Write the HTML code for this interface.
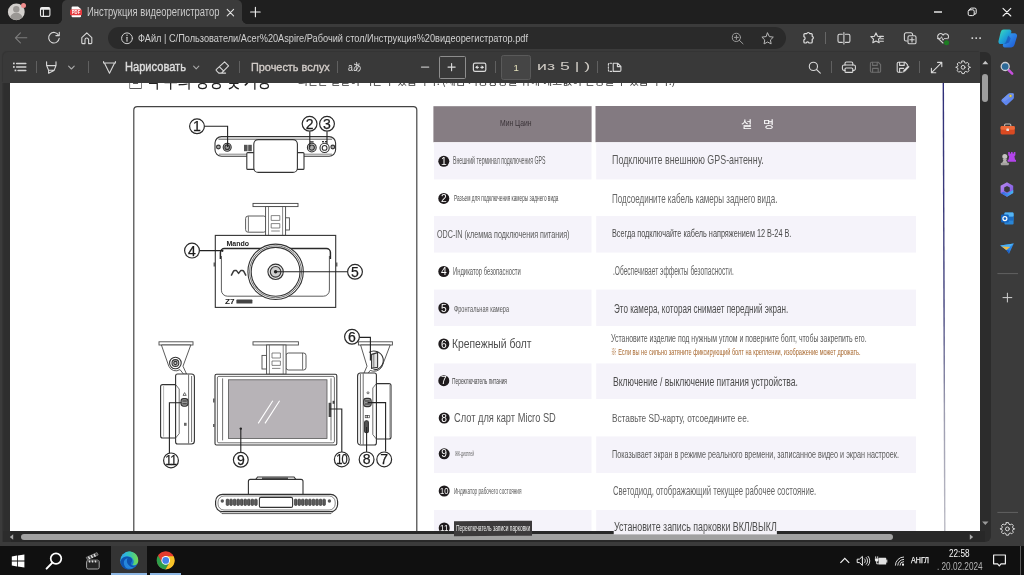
<!DOCTYPE html>
<html lang="ru"><head><meta charset="utf-8"><title>Инструкция видеорегистратор</title>
<style>
*{box-sizing:border-box}
html,body{margin:0;padding:0}
body{width:1024px;height:575px;overflow:hidden;position:relative;background:#3b3b3b;font-family:"Liberation Sans","Noto Sans CJK KR",sans-serif}
.a{position:absolute}
.t{position:absolute;white-space:nowrap;line-height:1;transform-origin:0 50%}
svg{position:absolute;left:0;top:0;overflow:visible}
.ic{fill:none;stroke:#d8d8d8;stroke-width:1.1;stroke-linecap:round;stroke-linejoin:round}
.dg{fill:none;stroke:#333;stroke-width:1.1}
.dgw{fill:#fff;stroke:#333;stroke-width:1.1}
.num{font-family:"Liberation Sans",sans-serif;font-size:12.5px;fill:#1c1c1c;stroke:#1c1c1c;stroke-width:.25;text-anchor:middle}
.sep{position:absolute;width:1px;background:#606060}
</style></head>
<body>
<div class="a" style="left:0;top:0;width:1024px;height:575px;will-change:transform"><div class="a" style="left:10px;top:82.8px;width:970px;height:448.5px;background:#fff;overflow:hidden"></div>
<div class="a" style="left:0;top:0;width:1024px;height:531.3px;overflow:hidden">
<svg width="1024" height="575" viewBox="0 0 1024 575">
 <defs><linearGradient id="mline" gradientUnits="userSpaceOnUse" x1="0" y1="83" x2="0" y2="532"><stop offset="0" stop-color="#2e2e78"/><stop offset=".5" stop-color="#45457f"/><stop offset=".72" stop-color="#9a9aae"/><stop offset="1" stop-color="#bdbdc6"/></linearGradient><clipPath id="pgclip"><rect x="10" y="82.800" width="970" height="448.500"/></clipPath></defs>
 <g clip-path="url(#pgclip)">
 <!-- right margin line -->
 <path d="M943.3 83L944.8 532" stroke="url(#mline)" stroke-width="1.400"/>
 <!-- table header -->
 <rect x="433.4" y="106.2" width="158.2" height="36" fill="#867d83"/>
 <rect x="595.5" y="106" width="320.5" height="36.2" fill="#837a81"/>
 <rect x="434" y="142.4" width="157.5" height="37" fill="#f5f3fa"/><rect x="596.2" y="142.4" width="319.8" height="37" fill="#f5f3fa"/><rect x="434" y="216" width="157.5" height="36.6" fill="#f5f3fa"/><rect x="596.2" y="216" width="319.8" height="36.6" fill="#f5f3fa"/><rect x="434" y="289.6" width="157.5" height="36.4" fill="#f5f3fa"/><rect x="596.2" y="289.6" width="319.8" height="36.4" fill="#f5f3fa"/><rect x="434" y="363.4" width="157.5" height="35.6" fill="#f5f3fa"/><rect x="596.2" y="363.4" width="319.8" height="35.6" fill="#f5f3fa"/><rect x="434" y="436.4" width="157.5" height="36.6" fill="#f5f3fa"/><rect x="596.2" y="436.4" width="319.8" height="36.6" fill="#f5f3fa"/><rect x="434" y="510" width="157.5" height="36" fill="#f5f3fa"/><rect x="596.2" y="510" width="319.8" height="36" fill="#f5f3fa"/>
 <!-- diagram frame -->
 <rect x="133.8" y="106.6" width="283" height="440" rx="3.5" class="dg" style="stroke:#444;stroke-width:1.2"/>

 <!-- ===== top view ===== -->
 <rect x="215" y="136.6" width="120.6" height="19.6" rx="6.5" class="dgw"/>
 <path d="M218.5 139.2h113.6" class="dg" style="stroke-width:.8"/>
 <path d="M219 154.2h113" class="dg" style="stroke-width:.6"/>
 <rect x="246.8" y="152.6" width="57.2" height="16.8" rx="1" class="dgw"/>
 <rect x="253.8" y="139.6" width="43.6" height="32.8" rx="4.5" class="dgw"/>
 <circle cx="218.4" cy="147" r="1.9" class="dg" style="fill:#aaa"/>
 <circle cx="332.8" cy="147" r="1.9" class="dg" style="fill:#aaa"/>
 <circle cx="227.2" cy="147.2" r="4" class="dg" style="fill:#bbb"/><circle cx="227.2" cy="147.2" r="2.3" class="dg" style="fill:#999"/>
 <rect x="244" y="144.8" width="3.6" height="6.4" fill="#555"/><rect x="248.2" y="144.8" width="3.6" height="6.4" fill="#555"/>
 <circle cx="311.8" cy="147.6" r="4.4" class="dg" style="fill:#ddd"/><circle cx="311.8" cy="147.6" r="2.6" class="dg" style="fill:#aaa"/>
 <circle cx="324.6" cy="147.9" r="4.6" class="dgw"/><circle cx="324.6" cy="147.9" r="2.4" class="dg"/>
 <rect x="310" y="141.2" width="3.6" height="1.4" fill="#333"/><rect x="322" y="141" width="2" height="1.4" fill="#333"/><rect x="325" y="141" width="2" height="1.4" fill="#333"/>
 <path d="M204.6 126.2h23v20.8" class="dg" style="stroke:#222"/>
 <path d="M309.8 131.4v16" class="dg" style="stroke:#222"/>
 <path d="M327 131.4v13" class="dg" style="stroke:#222"/>
 <circle cx="197" cy="126.3" r="7.4" class="dgw" style="stroke:#2a2a2a;stroke-width:1.2"/><text x="197" y="131.27" class="num" style="font-size:14px">1</text><circle cx="309.6" cy="123.8" r="7.4" class="dgw" style="stroke:#2a2a2a;stroke-width:1.2"/><text x="309.6" y="128.77" class="num" style="font-size:14px">2</text><circle cx="327" cy="123.8" r="7.4" class="dgw" style="stroke:#2a2a2a;stroke-width:1.2"/><text x="327" y="128.77" class="num" style="font-size:14px">3</text>

 <!-- ===== front view ===== -->
 <rect x="253" y="203.400" width="45" height="3.200" class="dgw" style="stroke:#444;stroke-width:.900"/>
 <rect x="245.600" y="216" width="20.600" height="16.200" rx="2.500" class="dgw" style="stroke:#4a4a4a;stroke-width:.900"/>
 <path d="M248.4 216.4v15.2" class="dg" style="stroke-width:.7"/>
 <rect x="285.400" y="217.800" width="4" height="12.200" class="dgw" style="stroke:#4a4a4a;stroke-width:.900"/>
 <rect x="265.600" y="206.600" width="20" height="28.800" class="dgw" style="stroke:#444;stroke-width:.900"/>
 <path d="M268.500 206.600v28.800M282.600 206.600v28.800M271.200 215.600h8.600v4.800h-8.600zM271.200 223.600h8.600v4.400h-8.600zM271.200 231h8.600" class="dg" style="stroke-width:.700;stroke:#555"/>
 <rect x="215.300" y="235.400" width="120.400" height="72" class="dgw"/>
 <path d="M220.400 259v-6.400a4 4 0 0 1 4 -4h102a4 4 0 0 1 4 4v6.400" class="dg" style="stroke-width:1.500;stroke:#2a2a2a"/>
 <path d="M221.400 256v34.200a6 6 0 0 0 6 6h96a6 6 0 0 0 6 -6v-34.200" class="dg" style="stroke-width:.800"/>
 <path d="M214.200 262.600v4M336.800 262.600v4" class="dg"/>
 <circle cx="275.6" cy="271.8" r="27.7" class="dgw"/>
 <circle cx="275.6" cy="271.8" r="26" class="dg" style="stroke-width:.7"/>
 <circle cx="275.6" cy="271.8" r="24.4" class="dg"/>
 <circle cx="275.6" cy="271.8" r="7.7" class="dg" style="fill:#e6e6e6"/>
 <circle cx="275.6" cy="271.8" r="5.3" class="dg" style="fill:#cfcfcf"/>
 <circle cx="275.6" cy="271.8" r="1.7" fill="#222"/>
 <path d="M231.200 275.600l2.200 -4.200q.500 -1 1.500 -1h1.400l2.300 3 2.300 -3h1.400q1 0 1.500 1l2.200 4.200" class="dg" style="stroke:#3c3c3c;stroke-width:1.500;stroke-linejoin:round"/>
 <text x="226.4" y="246" style="font-family:'Liberation Sans',sans-serif;font-weight:700;font-size:6.6px;fill:#222" textLength="22.6" lengthAdjust="spacingAndGlyphs">Mando</text>
 <text x="225" y="303.8" style="font-family:'Liberation Sans',sans-serif;font-weight:700;font-size:6.4px;fill:#222" textLength="9.6" lengthAdjust="spacingAndGlyphs">Z7</text>
 <rect x="236.4" y="299.6" width="16" height="4" rx=".6" fill="#444"/>
 <path d="M199.4 250.6h23" class="dg" style="stroke:#222"/><circle cx="222.4" cy="250.8" r="1.1" fill="#222"/>
 <path d="M275.6 271.8h72" class="dg" style="stroke:#222"/>
 <circle cx="192" cy="250.6" r="7.4" class="dgw" style="stroke:#2a2a2a;stroke-width:1.2"/><text x="192" y="255.57" class="num" style="font-size:14px">4</text><circle cx="355" cy="271.8" r="7.4" class="dgw" style="stroke:#2a2a2a;stroke-width:1.2"/><text x="355" y="276.77" class="num" style="font-size:14px">5</text>

 <!-- ===== left side view ===== -->
 <rect x="159" y="341.800" width="34" height="3.200" class="dgw" style="stroke:#4a4a4a;stroke-width:.900"/>
 <path d="M161.400 345l7.400 21.200a7.600 7.600 0 0 0 11.200 3.400l3.600 4.600h3l-3.600 -8 7.800 -21.200z" class="dgw" style="stroke:#4a4a4a;stroke-width:.900"/>
 <circle cx="175.4" cy="363" r="5.8" class="dgw"/><circle cx="175.4" cy="363" r="3.4" class="dg" style="fill:#ccc"/><circle cx="175.4" cy="363" r="1.6" class="dg"/>
 <path d="M162.6 384.6h13v53.4h-13a2 2 0 0 1-2-2v-49.4a2 2 0 0 1 2-2z" class="dgw"/>
 <path d="M163.6 386v50.6" class="dg" style="stroke-width:.6;stroke:#888"/>
 <path d="M175.6 376a2 2 0 0 1 2-2h13.8a3 3 0 0 1 3 3v64a3 3 0 0 1-3 3h-13.8a2 2 0 0 1-2-2z" class="dgw"/>
 <path d="M188.6 374.6v68.8M191.6 376v66" class="dg" style="stroke-width:.7"/>
 <path d="M175.6 384.6l3.6 4.4v44.6l-3.6 4.4" class="dg" style="stroke-width:.7"/>
 <path d="M183 395.400l1.600 -2.800 1.600 2.800z" class="dg" style="stroke-width:.7"/>
 <rect x="181" y="398.6" width="7" height="7.6" rx="2.6" class="dg" style="fill:#999"/>
 <path d="M182.4 401h4.4M182.4 403.8h4.400000000000006" stroke="#222" stroke-width=".9"/>
 <rect x="184" y="422.8" width="2.6" height="3" fill="#666"/>
 <path d="M169.400 453.200v-50.400h12" class="dg" style="stroke:#222"/>
 <circle cx="171" cy="460.4" r="7.4" class="dgw" style="stroke:#2a2a2a;stroke-width:1.2"/><text x="170.6" y="465.44" class="num" style="font-size:14px;letter-spacing:-1.2px" textLength="10.5" lengthAdjust="spacingAndGlyphs">11</text>

 <!-- ===== back view ===== -->
 <rect x="253" y="341.800" width="45.400" height="3.200" class="dgw" style="stroke:#4a4a4a;stroke-width:.900"/>
 <rect x="286" y="353" width="20" height="17" rx="2.500" class="dgw" style="stroke:#4a4a4a;stroke-width:.900"/>
 <path d="M302.6 353v16.6" class="dg" style="stroke-width:.7"/>
 <rect x="262" y="355.400" width="4.600" height="13.600" class="dgw" style="stroke:#4a4a4a;stroke-width:.900"/>
 <rect x="266.600" y="345" width="19.400" height="29.200" class="dgw" style="stroke:#4a4a4a;stroke-width:.900"/>
 <path d="M269.400 345v29.200M283.200 345v29.200M272 353h8.400v5h-8.400zM272 361h8.400v4.400h-8.400zM272 368.400h8.400" class="dg" style="stroke-width:.700;stroke:#555"/>
 <rect x="215" y="374.2" width="121.8" height="70.8" rx="1.5" class="dgw"/>
 <rect x="217.4" y="376.4" width="117" height="66.4" rx="1.5" class="dg" style="stroke-width:.7"/>
 <path d="M222.600 378.400v62M331 378.400v62" class="dg" style="stroke-width:.7"/>
 <rect x="228.4" y="379.8" width="98.6" height="58.6" fill="#b7b3b7" stroke="#555" stroke-width=".8"/>
 <path d="M258.200 423.400l14.600 -22.600M265 423.400l14.600 -22.600" stroke="#fff" stroke-width="1.1"/>
 <path d="M213.800 398.600v4M213.800 424v3" class="dg"/>
 <rect x="328.6" y="402.8" width="2.600" height="14.200" fill="#444"/>
 <rect x="332.600" y="400.800" width="2" height="3" fill="#444"/>
 <circle cx="240.8" cy="428.600" r="1.2" fill="#222"/>
 <path d="M240.800 428.600v24" class="dg" style="stroke:#222"/>
 <path d="M329.8 409h12v43" class="dg" style="stroke:#222"/>
 <circle cx="240.8" cy="459.8" r="7.4" class="dgw" style="stroke:#2a2a2a;stroke-width:1.2"/><text x="240.8" y="464.77" class="num" style="font-size:14px">9</text><circle cx="341.8" cy="459.4" r="7.4" class="dgw" style="stroke:#2a2a2a;stroke-width:1.2"/><text x="341.4" y="464.44" class="num" style="font-size:14px;letter-spacing:-1.2px" textLength="10.5" lengthAdjust="spacingAndGlyphs">10</text>

 <!-- ===== right side view ===== -->
 <rect x="358.400" y="341.800" width="34" height="3.200" class="dgw" style="stroke:#4a4a4a;stroke-width:.900"/>
 <path d="M360.600 345l6.400 21.200 -3.400 7.800h4l2.600 -3.600a9 9 0 0 0 11.600 -3.400l8.400 -22z" class="dgw" style="stroke:#4a4a4a;stroke-width:.900"/>
 <path d="M369 352.400a9.400 9.400 0 1 1 4.400 17.400" class="dg"/>
 <path d="M371.600 354.400l6 -1.800v14.600l-6 1.200z" class="dg" style="fill:#e4e4e4"/>
 <path d="M373.800 354v13.800" class="dg" style="stroke-width:.6"/>
 <path d="M376.400 383.600h12.600a2 2 0 0 1 2 2v51.400a2 2 0 0 1 -2 2h-12.600z" class="dgw"/>
 <path d="M389.600 385v52.600" class="dg" style="stroke-width:.6;stroke:#888"/>
 <path d="M376.400 375a2 2 0 0 0 -2 -2h-13.800a3 3 0 0 0 -3 3v66a3 3 0 0 0 3 3h13.800a2 2 0 0 0 2 -2z" class="dgw"/>
 <path d="M360.400 374v70M363.200 373.400v71.200" class="dg" style="stroke-width:.7"/>
 <path d="M376.400 383.600l-3.600 4.400v46.600l3.600 4.400" class="dg" style="stroke-width:.7"/>
 <circle cx="368" cy="392.800" r="1" class="dg" style="stroke-width:.7"/>
 <rect x="363.600" y="398.400" width="7.600" height="8.200" rx="2.800" class="dg" style="fill:#999"/>
 <path d="M365 401h4.800M365 404h4.800" stroke="#222" stroke-width=".9"/>
 <rect x="365.200" y="415.600" width="1.800" height="2.200" class="dg" style="stroke-width:.6"/><rect x="367.600" y="415.600" width="1.800" height="2.200" class="dg" style="stroke-width:.6"/>
 <rect x="364.600" y="420.800" width="3.800" height="12" rx="1.600" class="dg" style="fill:#555"/>
 <path d="M359.400 337.400h11v23" class="dg" style="stroke:#222"/>
 <path d="M367.600 402.600h18v49" class="dg" style="stroke:#222"/>
 <path d="M366.600 452v-25" class="dg" style="stroke:#222"/>
 <circle cx="352" cy="336.8" r="7.4" class="dgw" style="stroke:#2a2a2a;stroke-width:1.2"/><text x="352" y="341.77" class="num" style="font-size:14px">6</text><circle cx="366.6" cy="459.4" r="7.4" class="dgw" style="stroke:#2a2a2a;stroke-width:1.2"/><text x="366.6" y="464.37" class="num" style="font-size:14px">8</text><circle cx="384.2" cy="459.4" r="7.4" class="dgw" style="stroke:#2a2a2a;stroke-width:1.2"/><text x="384.2" y="464.37" class="num" style="font-size:14px">7</text>

 <!-- ===== bottom view ===== -->
 <path d="M255.600 479.600l2 -2.600h36.400l2 2.600" class="dgw"/>
 <path d="M262 478.200h26" class="dg" style="stroke-width:1.300"/>
 <path d="M248.400 494.400v-13a2 2 0 0 1 2 -2h50.600a2 2 0 0 1 2 2v13" class="dgw"/>
 <path d="M220 511.600l2 2h109l2 -2" class="dg" style="stroke-width:.8"/>
 <rect x="215.600" y="494.400" width="122" height="17.200" rx="7" class="dgw" style="stroke-width:1.200"/>
 <rect x="218" y="496" width="117.200" height="14" rx="6" class="dg" style="stroke-width:.6"/>
 <rect x="226.20" y="499.2" width="2.6" height="6.2" rx="0.800" fill="#5c5c5c" stroke="#222" stroke-width=".600"/><rect x="294.40" y="499.2" width="2.6" height="6.2" rx="0.800" fill="#5c5c5c" stroke="#222" stroke-width=".600"/><rect x="229.75" y="499.2" width="2.6" height="6.2" rx="0.800" fill="#5c5c5c" stroke="#222" stroke-width=".600"/><rect x="297.95" y="499.2" width="2.6" height="6.2" rx="0.800" fill="#5c5c5c" stroke="#222" stroke-width=".600"/><rect x="233.30" y="499.2" width="2.6" height="6.2" rx="0.800" fill="#5c5c5c" stroke="#222" stroke-width=".600"/><rect x="301.50" y="499.2" width="2.6" height="6.2" rx="0.800" fill="#5c5c5c" stroke="#222" stroke-width=".600"/><rect x="236.85" y="499.2" width="2.6" height="6.2" rx="0.800" fill="#5c5c5c" stroke="#222" stroke-width=".600"/><rect x="305.05" y="499.2" width="2.6" height="6.2" rx="0.800" fill="#5c5c5c" stroke="#222" stroke-width=".600"/><rect x="240.40" y="499.2" width="2.6" height="6.2" rx="0.800" fill="#5c5c5c" stroke="#222" stroke-width=".600"/><rect x="308.60" y="499.2" width="2.6" height="6.2" rx="0.800" fill="#5c5c5c" stroke="#222" stroke-width=".600"/><rect x="243.95" y="499.2" width="2.6" height="6.2" rx="0.800" fill="#5c5c5c" stroke="#222" stroke-width=".600"/><rect x="312.15" y="499.2" width="2.6" height="6.2" rx="0.800" fill="#5c5c5c" stroke="#222" stroke-width=".600"/><rect x="247.50" y="499.2" width="2.6" height="6.2" rx="0.800" fill="#5c5c5c" stroke="#222" stroke-width=".600"/><rect x="315.70" y="499.2" width="2.6" height="6.2" rx="0.800" fill="#5c5c5c" stroke="#222" stroke-width=".600"/><rect x="251.05" y="499.2" width="2.6" height="6.2" rx="0.800" fill="#5c5c5c" stroke="#222" stroke-width=".600"/><rect x="319.25" y="499.2" width="2.6" height="6.2" rx="0.800" fill="#5c5c5c" stroke="#222" stroke-width=".600"/><rect x="254.60" y="499.2" width="2.6" height="6.2" rx="0.800" fill="#5c5c5c" stroke="#222" stroke-width=".600"/><rect x="322.80" y="499.2" width="2.6" height="6.2" rx="0.800" fill="#5c5c5c" stroke="#222" stroke-width=".600"/>
 <rect x="259.400" y="497.400" width="33.200" height="10" rx="1.500" class="dgw"/>
 <circle cx="222.300" cy="501" r="1.700" fill="#555"/><circle cx="329.400" cy="501" r="1.700" fill="#555"/>

 <!-- table bullets -->
 <circle cx="443.8" cy="161.3" r="5.5" fill="#1f1b1d"/><text x="443.8" y="164.972" style="font-family:'Liberation Sans',sans-serif;font-weight:400;font-size:10.2px;fill:#fff;text-anchor:middle">1</text><circle cx="443.8" cy="198.4" r="5.5" fill="#1f1b1d"/><text x="443.8" y="202.072" style="font-family:'Liberation Sans',sans-serif;font-weight:400;font-size:10.2px;fill:#fff;text-anchor:middle">2</text><circle cx="443.8" cy="271.5" r="5.5" fill="#1f1b1d"/><text x="443.8" y="275.172" style="font-family:'Liberation Sans',sans-serif;font-weight:400;font-size:10.2px;fill:#fff;text-anchor:middle">4</text><circle cx="443.8" cy="308" r="5.5" fill="#1f1b1d"/><text x="443.8" y="311.672" style="font-family:'Liberation Sans',sans-serif;font-weight:400;font-size:10.2px;fill:#fff;text-anchor:middle">5</text><circle cx="443.8" cy="344" r="5.5" fill="#1f1b1d"/><text x="443.8" y="347.672" style="font-family:'Liberation Sans',sans-serif;font-weight:400;font-size:10.2px;fill:#fff;text-anchor:middle">6</text><circle cx="443.8" cy="380.7" r="5.5" fill="#1f1b1d"/><text x="443.8" y="384.372" style="font-family:'Liberation Sans',sans-serif;font-weight:400;font-size:10.2px;fill:#fff;text-anchor:middle">7</text><circle cx="444.2" cy="418" r="5.5" fill="#1f1b1d"/><text x="444.2" y="421.672" style="font-family:'Liberation Sans',sans-serif;font-weight:400;font-size:10.2px;fill:#fff;text-anchor:middle">8</text><circle cx="444.2" cy="453.8" r="5.5" fill="#1f1b1d"/><text x="444.2" y="457.472" style="font-family:'Liberation Sans',sans-serif;font-weight:400;font-size:10.2px;fill:#fff;text-anchor:middle">9</text><circle cx="444.2" cy="491" r="5.5" fill="#1f1b1d"/><text x="444.2" y="494.24" style="font-family:'Liberation Sans',sans-serif;font-weight:400;font-size:9px;fill:#fff;text-anchor:middle" textLength="8.4" lengthAdjust="spacingAndGlyphs">10</text><circle cx="444.2" cy="528" r="5.5" fill="#1f1b1d"/><text x="444.2" y="531.24" style="font-family:'Liberation Sans',sans-serif;font-weight:400;font-size:9px;fill:#fff;text-anchor:middle" textLength="8.4" lengthAdjust="spacingAndGlyphs">11</text>
 <rect x="453" y="484" width="70" height="14" fill="#fff" opacity=".7"/>
 </g>
</svg>
<span class="t" style="left:500.4px;top:119.4px;font-size:8.4px;color:#3a3338;transform:scaleX(0.8112);">Мин Цаин</span><span class="t" style="left:741.3px;top:118.5px;font-size:10.6px;color:#fff;font-family:'Noto Sans CJK KR','Liberation Sans',sans-serif;transform:scaleX(1.1532);word-spacing:7px;">설 명</span><span class="t" style="left:453.2px;top:155.7px;font-size:10.2px;color:#5a5a5a;transform:scaleX(0.5084);">Внешний терминал подключения GPS</span><span class="t" style="left:611.6px;top:153.3px;font-size:13px;color:#5a5a5a;transform:scaleX(0.6837);">Подключите внешнюю GPS-антенну.</span><span class="t" style="left:454.0px;top:194.1px;font-size:8.6px;color:#4a4a4a;transform:scaleX(0.5497);">Разъем для подключения камеры заднего вида</span><span class="t" style="left:611.6px;top:191.5px;font-size:13px;color:#666;transform:scaleX(0.6159);">Подсоедините кабель камеры заднего вида.</span><span class="t" style="left:436.6px;top:228.9px;font-size:11px;color:#5a5a5a;transform:scaleX(0.6514);">ODC-IN (клемма подключения питания)</span><span class="t" style="left:611.6px;top:228.1px;font-size:11.4px;color:#4a4a4a;transform:scaleX(0.6403);">Всегда подключайте кабель напряжением 12 В-24 В.</span><span class="t" style="left:453.0px;top:267.2px;font-size:10.4px;color:#5a5a5a;transform:scaleX(0.5642);">Индикатор безопасности</span><span class="t" style="left:612.6px;top:264.6px;font-size:12.5px;color:#666;transform:scaleX(0.5261);">.Обеспечивает эффекты безопасности.</span><span class="t" style="left:454.0px;top:304.0px;font-size:9.4px;color:#5a5a5a;transform:scaleX(0.5967);">Фронтальная камера</span><span class="t" style="left:614.0px;top:301.5px;font-size:13px;color:#4c4c4c;transform:scaleX(0.6213);">Это камера, которая снимает передний экран.</span><span class="t" style="left:452.2px;top:337.8px;font-size:12.4px;color:#4c4c4c;transform:scaleX(0.8336);">Крепежный болт</span><span class="t" style="left:611.0px;top:333.0px;font-size:10.6px;color:#5a5a5a;transform:scaleX(0.6558);">Установите изделие под нужным углом и поверните болт, чтобы закрепить его.</span><span class="t" style="left:611.0px;top:347.4px;font-size:9.6px;color:#a8682f;font-family:'Liberation Sans','Noto Sans CJK KR',sans-serif;transform:scaleX(0.5834);">※ Если вы не сильно затяните фиксирующий болт на креплении, изображение может дрожать.</span><span class="t" style="left:452.0px;top:376.0px;font-size:9.4px;color:#444;transform:scaleX(0.5187);">Переключатель питания</span><span class="t" style="left:612.6px;top:374.5px;font-size:13px;color:#4c4c4c;transform:scaleX(0.6619);">Включение / выключение питания устройства.</span><span class="t" style="left:454.2px;top:411.9px;font-size:12.2px;color:#5a5a5a;transform:scaleX(0.7614);">Слот для карт Micro SD</span><span class="t" style="left:612.0px;top:412.2px;font-size:11.6px;color:#5a5a5a;transform:scaleX(0.7107);">Вставьте SD-карту, отсоедините ее.</span><span class="t" style="left:455.0px;top:450.1px;font-size:7px;color:#666;transform:scaleX(0.4744);">ЖК-дисплей</span><span class="t" style="left:612.0px;top:448.6px;font-size:10.8px;color:#5a5a5a;transform:scaleX(0.6669);">Показывает экран в режиме реального времени, записанное видео и экран настроек.</span><span class="t" style="left:454.0px;top:486.6px;font-size:8.8px;color:#555;transform:scaleX(0.5299);">Индикатор рабочего состояния</span><span class="t" style="left:613.3px;top:484.7px;font-size:12.6px;color:#666;transform:scaleX(0.6131);">Светодиод, отображающий текущее рабочее состояние.</span><span class="t" style="left:127.6px;top:69.5px;font-size:20px;color:#222;font-family:'Noto Sans CJK KR',sans-serif;transform:scaleX(0.7563);">▣ 각 부의 명칭 및 기능</span><span class="t" style="left:297.7px;top:74.5px;font-size:11.5px;color:#333;font-family:'Noto Sans CJK KR',sans-serif;transform:scaleX(0.9380);">최근은 일일이 버튼 구 있습니다. (제품 기능향상을 위해 예고없이 변경될 수 있습니다.)</span></div>

<div class="a" style="left:0;top:0;width:1024px;height:24px;background:#1f1f1f"></div>
<div class="a" style="left:62px;top:0;width:180px;height:24px;background:#3b3b3b;border-radius:5px 5px 0 0"></div>
<div class="a" style="left:57px;top:19px;width:5px;height:5px;background:radial-gradient(circle at 0 0,#1f1f1f 4.6px,#3b3b3b 5.2px)"></div>
<div class="a" style="left:242px;top:19px;width:5px;height:5px;background:radial-gradient(circle at 100% 0,#1f1f1f 4.6px,#3b3b3b 5.2px)"></div>
<svg width="1024" height="60" viewBox="0 0 1024 60">
 <!-- avatar -->
 <circle cx="16.300" cy="11.900" r="8.400" fill="#d2cfcc"/>
 <circle cx="16.300" cy="9.300" r="3.200" fill="#9a9794"/>
 <path d="M10.300 17.600a6 4.800 0 0 1 12 0a8.400 8.400 0 0 1 -12 0z" fill="#9a9794"/>
 <circle cx="23.500" cy="5.600" r="2.500" fill="#f08c8c"/>
 <!-- tab actions -->
 <rect x="40.500" y="7.600" width="9.400" height="8.800" rx="1.500" class="ic" style="stroke:#ececec;stroke-width:1.100"/>
 <path d="M40.500 9.800v-0.700a1.500 1.500 0 0 1 1.500 -1.500h6.400a1.500 1.500 0 0 1 1.500 1.500v0.700z" fill="#ececec"/>
 <path d="M43.400 9.800v6.600" class="ic" style="stroke:#ececec;stroke-width:1.100"/>
 <!-- pdf favicon -->
 <path d="M72.600 6.400h5.400l3 2.600v7.200a1 1 0 0 1 -1 1h-7.400a1 1 0 0 1 -1 -1v-8.800a1 1 0 0 1 1 -1z" fill="#fff"/>
 <rect x="70" y="9.600" width="12" height="5.600" rx="0.800" fill="#e5393d"/>
 <text x="76" y="14" style="font-family:'Liberation Sans',sans-serif;font-weight:700;font-size:4.6px;fill:#fff;text-anchor:middle" textLength="8.4" lengthAdjust="spacingAndGlyphs">PDF</text>
 <!-- tab close -->
 <path d="M227.2 9.4l6.4 6.400M233.600 9.400l-6.400 6.400" class="ic" style="stroke:#e0e0e0;stroke-width:1.100"/>
 <!-- new tab -->
 <path d="M250.600 12h9.600M255.400 7.200v9.600" class="ic" style="stroke:#f0f0f0;stroke-width:1.100"/>
 <!-- window controls -->
 <path d="M934 12h8" class="ic" style="stroke:#f4f4f4;stroke-width:1.400;stroke-linecap:butt"/>
 <rect x="968.2" y="9.8" width="6" height="5.8" rx="1.5" class="ic" style="stroke:#f2f2f2;stroke-width:1"/>
 <path d="M970 9.6v-0.2a1.4 1.4 0 0 1 1.4-1.3h3.3a1.5 1.5 0 0 1 1.5 1.5v3.2a1.4 1.4 0 0 1-1.4 1.4h-0.4" class="ic" style="stroke:#f2f2f2;stroke-width:1"/>
 <path d="M1003 8.3l7.8 7.7M1010.8 8.3l-7.8 7.7" class="ic" style="stroke:#f2f2f2;stroke-width:1.1"/>
</svg>
<span class="t" style="left:87.0px;top:6.3px;font-size:12px;color:#cacaca;transform:scaleX(0.7836);">Инструкция видеорегистратор</span>
<div class="a" style="left:108px;top:27px;width:678px;height:22px;border-radius:11px;background:#2a2a2a"></div>
<svg width="1024" height="60" viewBox="0 0 1024 60">
 <!-- back -->
 <path d="M26.8 37.8H15.4M20.4 32.8l-5 5 5 5" class="ic" style="stroke:#7d7d7d"/>
 <!-- refresh -->
 <path d="M58.6 35.2a5.3 5.3 0 1 0 0.6 3.2" class="ic"/>
 <path d="M59.3 32.2v3.4h-3.4" class="ic"/>
 <!-- home -->
 <path d="M81.8 37.6l5-4.8 5 4.8v5.2a0.8 0.8 0 0 1-0.8 0.8h-2.4v-3.8a1.8 1.8 0 0 0-3.6 0v3.8h-2.4a0.8 0.8 0 0 1-0.8-0.8z" class="ic"/>
 <!-- info -->
 <circle cx="127" cy="38.3" r="5.4" class="ic" style="stroke:#d0d0d0;stroke-width:1"/>
 <path d="M127 37.3v4" class="ic" style="stroke:#d0d0d0;stroke-width:1.1"/>
 <circle cx="127" cy="35.3" r="0.7" fill="#d0d0d0"/>
 <!-- zoom -->
 <circle cx="736.4" cy="37.4" r="4.1" class="ic" style="stroke:#9c9c9c;stroke-width:1"/>
 <path d="M739.4 40.4l3.6 3.4M734.4 37.4h4M736.4 35.4v4" class="ic" style="stroke:#9c9c9c;stroke-width:1"/>
 <!-- star -->
 <path d="M767.6 33l1.75 3.6 3.95 0.55-2.85 2.8 0.68 3.95-3.53-1.87-3.53 1.87 0.68-3.95-2.85-2.8 3.95-0.55z" class="ic" style="stroke:#b8b8b8;stroke-width:1"/>
 <!-- extensions -->
 <path d="M805.5 33.6h1.3a1.5 1.5 0 0 1 2.9 0h1.5a1 1 0 0 1 1 1v1.7a1.55 1.55 0 0 1 0 3v2.7a1 1 0 0 1-1 1h-2.2a1.5 1.5 0 0 0-2.9 0h-1.2a1 1 0 0 1-1-1v-2.2a1.6 1.6 0 0 0 0-3.1v-2.1a1 1 0 0 1 1-1z" class="ic" style="stroke:#e0e0e0;stroke-width:1.2"/>
 <!-- split screen -->
 <path d="M842.3 34.2h-2.8a1.5 1.5 0 0 0-1.5 1.5v5.2a1.5 1.5 0 0 0 1.5 1.5h2.8M845.5 34.2h2.9a1.5 1.5 0 0 1 1.5 1.5v5.2a1.5 1.5 0 0 1-1.5 1.5h-2.9M843.9 32.6v11.4" class="ic"/>
 <!-- favorites -->
 <path d="M876 32.9l1.55 3.3 3.6 0.45-2.65 2.5 0.7 3.6-3.2-1.8-3.2 1.8 0.7-3.6-2.65-2.5 3.6-0.45z" class="ic"/>
 <path d="M879.6 36.4h3.8M880.6 38.8h2.8M880 41.2h3.4" class="ic"/>
 <!-- collections -->
 <path d="M907.2 41h-1.2a1.6 1.6 0 0 1-1.6-1.6v-5a1.6 1.6 0 0 1 1.6-1.6h5a1.6 1.6 0 0 1 1.6 1.6v0.8" class="ic"/>
 <rect x="908" y="35.8" width="8" height="8" rx="1.4" class="ic"/>
 <path d="M912 37.6v4.4M909.8 39.8h4.4" class="ic"/>
 <!-- heart -->
 <path d="M943 43l-4.6-4.4a2.9 2.9 0 0 1 4.4-3.9l0.3 0.4 0.3-0.4a2.9 2.9 0 0 1 4.4 3.9" class="ic"/>
 <path d="M937.4 38.6h3l1.1-1.9 1.5 3.6 1.1-1.7h2.6" class="ic" style="stroke-width:0.9"/>
 <circle cx="946.6" cy="42.8" r="2.5" fill="#1c7c22"/>
 <!-- dots -->
 <circle cx="972.3" cy="38.1" r="0.95" fill="#e6e6e6"/><circle cx="976.2" cy="38.1" r="0.95" fill="#e6e6e6"/><circle cx="980.1" cy="38.1" r="0.95" fill="#e6e6e6"/>
 <!-- copilot -->
 <defs>
  <linearGradient id="cpa" x1="0" y1="0" x2="1" y2="1"><stop offset="0" stop-color="#3fe0b4"/><stop offset="0.5" stop-color="#1fa6d8"/><stop offset="1" stop-color="#1c63d0"/></linearGradient>
  <linearGradient id="cpb" x1="0" y1="0" x2="1" y2="1"><stop offset="0" stop-color="#3aa8f2"/><stop offset="1" stop-color="#1c55d4"/></linearGradient>
 </defs>
 <path d="M1011.2 33.2h3.4a2.5 2.5 0 0 1 2.4 3.2l-2.6 8.600000000000001a3.400 3.400 0 0 1 -3.200 2.400h-6.400a2 2 0 0 1 -1.900 -2.700l3.400 -9.200a3.400 3.400 0 0 1 3.200 -2.300z" fill="url(#cpb)"/>
 <path d="M1003.6 29.600h5.800a2 2 0 0 1 1.900 2.700l-3.600 10a2.800 2.800 0 0 1 -2.600 1.800h-4.300a2.400 2.400 0 0 1 -2.300 -3.100l2.200 -9a3.200 3.200 0 0 1 3.100 -2.400z" fill="url(#cpa)"/>
 <path d="M1008.200 35.400l-2.300 6.600a2.800 2.800 0 0 1 -2.600 1.800h2.500l3.300 -1.200 1.600 -4.400z" fill="#1746b0" opacity=".55"/>
</svg>
<div class="sep" style="left:825px;top:32px;height:12px;background:#666"></div>
<span class="t" style="left:137.5px;top:32.7px;font-size:11.2px;color:#d0d0d0;transform:scaleX(0.8226);">ФАйл | С/Пользователи/Acer%20Aspire/Рабочий стол/Инструкция%20видеорегистратор.pdf</span>
<div class="a" style="left:3px;top:52px;width:977px;height:30.800px;background:#393939;border-radius:5px 0 0 0;box-shadow:-1px -1px 1px rgba(0,0,0,.12)"></div>
<div class="a" style="left:2px;top:82.800px;width:8px;height:459.600px;background:linear-gradient(90deg,#363636,#2e2e2e 2px)"></div>
<div class="a" style="left:439px;top:55.5px;width:26.5px;height:23.5px;border:1px solid #8e8e8e;border-radius:1.500px"></div>
<div class="a" style="left:500.5px;top:55px;width:30.5px;height:24.5px;background:#454545;border:1px solid #5a5a5a;border-radius:2.5px"></div>
<div class="sep" style="left:36px;top:61px;height:12px"></div>
<div class="sep" style="left:88px;top:61px;height:12px"></div>
<div class="sep" style="left:239px;top:61px;height:12px"></div>
<div class="sep" style="left:337px;top:61px;height:12px"></div>
<div class="sep" style="left:495px;top:61px;height:12px"></div>
<div class="sep" style="left:597px;top:61px;height:12px"></div>
<div class="sep" style="left:831px;top:61px;height:12px"></div>
<div class="sep" style="left:919px;top:61px;height:12px"></div>
<svg width="1024" height="100" viewBox="0 0 1024 100">
 <!-- contents list -->
 <path d="M16.600 63.400h9.200M16.600 66.900h9.200M18 70.400h7.800" class="ic" style="stroke-width:1.500;stroke:#d2d2d2"/>
 <rect x="13" y="62.6" width="1.7" height="1.7" fill="#d8d8d8"/><rect x="13" y="66.1" width="1.7" height="1.7" fill="#d8d8d8"/><rect x="14.6" y="69.6" width="1.7" height="1.7" fill="#d8d8d8"/>
 <!-- highlighter -->
 <path d="M46.6 61.8v3.8l2 4.6v3l5.4-2.6 2-5v-3.8M46.6 65.6h9.4M48.6 70.2h5.4" class="ic"/>
 <path d="M68.6 66.2l2.8 2.8 2.8-2.8" class="ic" style="stroke:#a8a8a8"/>
 <!-- draw -->
 <path d="M103.6 61.6v1.4h11.8v-1.4M104.4 63l5.1 10.2 5.1-10.2" class="ic"/>
 <path d="M193.6 66.2l2.6 2.6 2.6-2.6" class="ic" style="stroke:#a8a8a8"/>
 <!-- eraser -->
 <path d="M224.6 61.9l4 3.9-7.2 7.3h-2.6l-2.4-2.4a0.9 0.9 0 0 1 0-1.3zM219.4 66.8l4.4 4.3M221.4 73.1h4.2" class="ic"/>
 <!-- minus / plus -->
 <path d="M421.4 67.1h7.4" class="ic" style="stroke:#bdbdbd"/>
 <path d="M448 67.100h7.200M451.600 63.500v7.200" class="ic" style="stroke:#dcdcdc;stroke-width:1.100"/>
 <!-- fit width -->
 <rect x="473.4" y="63.2" width="12.4" height="8.2" rx="1.6" class="ic" style="stroke-width:1.2"/>
 <path d="M476.200 67.300h2.200M483 67.300h-2.200" class="ic" style="stroke-width:1.200"/>
 <path d="M477.600 65.300l-2.400 2 2.400 2zM481.600 65.300l2.400 2 -2.400 2z" fill="#e0e0e0"/>
 <!-- page view -->
 <path d="M611.6 63.2h-2a1.2 1.2 0 0 0-1.2 1.2v5.8a1.2 1.2 0 0 0 1.2 1.2h2" class="ic" style="stroke-dasharray:1.6 1.4"/>
 <path d="M613.2 63.2h4.4l3.3 3.3v3.7a1.2 1.2 0 0 1-1.2 1.2h-6.5zM617.4 63.4v3.2h3.3" class="ic"/>
 <!-- search -->
 <circle cx="813.4" cy="66.4" r="4.1" class="ic"/>
 <path d="M816.5 69.5l3.8 3.6" class="ic"/>
 <!-- print -->
 <path d="M845 65v-1.6a1.4 1.4 0 0 1 1.4-1.4h5a1.4 1.4 0 0 1 1.4 1.4v1.6" class="ic"/>
 <path d="M845 70.4h-1a1.6 1.6 0 0 1-1.6-1.6v-2.2a1.6 1.6 0 0 1 1.6-1.6h9.800000000000001a1.6 1.6 0 0 1 1.6 1.6v2.2a1.6 1.6 0 0 1-1.6 1.6h-1" class="ic"/>
 <rect x="845" y="68" width="7.8" height="4.4" rx="1" class="ic"/>
 <!-- save disabled -->
 <path d="M871.6 62.2h6.6l2.4 2.4v6.4a1.2 1.2 0 0 1-1.2 1.200000000000003h-7.8a1.2 1.2 0 0 1-1.2-1.2v-7.6a1.2 1.2 0 0 1 1.2-1.2z" class="ic" style="stroke:#6e6e6e"/>
 <path d="M872.6 62.4v3h4.6v-3M872.6 72v-3.6h5.6v3.600000000000003" class="ic" style="stroke:#6e6e6e"/>
 <!-- save as -->
 <path d="M903 72.2h-4.6a1.2 1.2 0 0 1-1.2-1.2v-7.6a1.2 1.2 0 0 1 1.2-1.2h6.6l2.4 2.4v2" class="ic"/>
 <path d="M899.6 62.4v3h4.6v-3M899.6 72v-3.6h4" class="ic"/>
 <path d="M902.6 72.6l0.6-2.300000000000001 4.3-4.3a1.1 1.1 0 0 1 1.6 1.6l-4.3 4.3z" fill="#e4e4e4" stroke="#3a3a3a" stroke-width="0.5"/>
 <!-- fullscreen -->
 <path d="M931.6 72.6l10-10M937.6 62.4h4.2v4.2M931.4 68.4v4.4h4.4" class="ic"/>
 <!-- settings gear -->
 <path d="M962.0 61.0 L964.2 61.0 L964.7 62.7 L965.9 63.2 L967.5 62.4 L969.0 63.9 L968.2 65.5 L968.7 66.7 L970.4 67.2 L970.4 67.0 L970.4 67.4 L968.7 67.9 L968.2 69.1 L969.0 70.7 L967.5 72.2 L965.9 71.4 L964.7 71.9 L964.2 73.6 L962.0 73.6 L961.5 71.9 L960.3 71.4 L958.7 72.2 L957.2 70.7 L958.0 69.1 L957.5 67.9 L955.8 67.4 L955.8 67.2 L957.5 66.7 L958.0 65.5 L957.2 63.9 L958.7 62.4 L960.3 63.2 L961.5 62.7 Z" class="ic" style="stroke-width:1"/>
 <circle cx="963.1" cy="67.3" r="1.9" class="ic" style="stroke-width:1"/>
</svg>
<span class="t" style="left:125.0px;top:60.3px;font-size:13.2px;color:#dcdcdc;transform:scaleX(0.8419);-webkit-text-stroke:.45px #dcdcdc;">Нарисовать</span><span class="t" style="left:251.2px;top:61.9px;font-size:11.4px;color:#d2ccc8;transform:scaleX(0.9546);-webkit-text-stroke:.35px #d2ccc8;">Прочесть вслух</span><span class="t" style="left:347.6px;top:62.3px;font-size:10.5px;color:#e0e0e0;font-family:'Liberation Sans','Noto Sans CJK JP',sans-serif;transform:scaleX(0.8321);">aあ</span><span class="t" style="top:62.8px;font-size:9.6px;color:#e6e3bc;left:513.6px;">1</span><span class="t" style="left:536.6px;top:62.4px;font-size:10.3px;color:#cfcbc4;transform:scaleX(1.7190);">из 5 | )</span>
<div class="a" style="left:980px;top:52px;width:10.500px;height:490.400px;background:#2c2c2c;border-radius:0 6px 6px 0"></div>
<div class="a" style="left:10px;top:531.300px;width:975px;height:11.100px;background:#282828"></div>
<div class="a" style="left:3px;top:531.300px;width:8px;height:11.100px;background:#2c2c2c"></div>
<div class="a" style="left:982.3px;top:74.3px;width:5.8px;height:27.5px;background:#9d9d9d;border-radius:3px"></div>
<div class="a" style="left:20.500px;top:533.800px;width:872px;height:6.500px;background:#a1a1a1;border-radius:3.250px"></div>
<svg width="1024" height="575" viewBox="0 0 1024 575">
 <path d="M982.3 64.2l3-3.4 3 3.4z" fill="#c4c4c4"/>
 <path d="M982.1 521.4l3.2 3.6 3.2-3.600000000000023z" fill="#9a9a9a"/>
 <path d="M13.2 534.2v5.6l-3.4-2.8z" fill="#a8a8a8"/>
 <path d="M982.2 534.2v5.6l3.4-2.8z" fill="#a8a8a8" transform="translate(-12.4,0)"/>
 <!-- sidebar: search -->
 <path d="M1008.600 70l3.600 3.600" stroke="#c64fdc" stroke-width="2.500" stroke-linecap="round"/>
 <circle cx="1005.2" cy="66.500" r="4" fill="#2d6a98" stroke="#cfcfd4" stroke-width="1.300"/>
 <!-- tag -->
 <path d="M1001.800 99.400l6.600 -5.600a2 2 0 0 1 1.300 -0.500h2.800a1.400 1.400 0 0 1 1.400 1.400v2.800a2 2 0 0 1 -0.600 1.400l-6.200 5.800a1.400 1.400 0 0 1 -2 0l-3.400 -3.300a1.400 1.400 0 0 1 0.100 -2z" fill="#5f86ee"/>
 <path d="M1001.800 99.400l6.600 -5.600a2 2 0 0 1 1.300 -0.500h2.800a1.400 1.400 0 0 1 1.400 1.400l-9.600 7z" fill="#7b9cf4" opacity=".6"/>
 <circle cx="1010.5" cy="95.900" r="1.250" fill="#f2d43a" stroke="#8a7a20" stroke-width=".3"/>
 <!-- toolbox -->
 <path d="M1004.600 126.400v-1.400a1 1 0 0 1 1 -1h4.200a1 1 0 0 1 1 1v1.400" fill="none" stroke="#c2bcb8" stroke-width="1.100"/>
 <rect x="1000.6" y="126" width="14.200" height="8.400" rx="1.400" fill="#d94a22"/>
 <rect x="1000.6" y="126" width="14.200" height="3.800" rx="1.400" fill="#ee6a3a"/>
 <rect x="1006.400" y="128.600" width="2.600" height="2.400" rx="0.600" fill="#e8dcd6"/>
 <!-- chess -->
 <circle cx="1004.8" cy="156.600" r="2.500" fill="#c4c2c0"/>
 <path d="M1002.600 159h4.400l-0.800 1.200 1.400 3h-5.600l1.400 -3z" fill="#b4b2b0"/>
 <rect x="1000.8" y="162.800" width="8" height="2.400" rx=".8" fill="#a4a2a0"/>
 <path d="M1008.200 152h1.600v1.400h1.200v-1.400h1.600v1.400h1.200v-1.400h1.600v3.200l-1 1 .7 3.600h.9v1.900h-8.400v-1.900h.9l.7 -3.600 -1 -1z" fill="#b244ea"/>
 <!-- m365 -->
 <defs>
  <linearGradient id="m3a" x1="0" y1="0" x2="1" y2="1"><stop offset="0" stop-color="#c08cf0"/><stop offset="1" stop-color="#6b4fe0"/></linearGradient>
  <linearGradient id="m3b" x1="0" y1="0" x2="1" y2="0"><stop offset="0" stop-color="#3b5be0"/><stop offset="1" stop-color="#43b8f0"/></linearGradient>
 </defs>
 <path d="M1007 182.2l6.2 3.5v7.400000000000006l-6.2 3.7-6.4-3.7v-7.4z" fill="url(#m3a)"/>
 <path d="M1000.6 193.1l6.4 3.7 6.2-3.7v-3.2l-6.2 3.6-3.2-1.8z" fill="url(#m3b)"/>
 <path d="M1004.2 187.6l2.8-1.6 2.8 1.6v3.4l-2.8 1.6-2.8-1.6z" fill="#3a3a3a"/>
 <!-- outlook -->
 <rect x="1004.4" y="212.600" width="9.200" height="12" rx="1.100" fill="#2a86d6"/>
 <rect x="1004.4" y="212.600" width="9.200" height="4.200" rx="1.100" fill="#55b4f2"/>
 <rect x="1009" y="216.800" width="4.600" height="3.800" fill="#1c6cc0"/>
 <rect x="1001" y="214.600" width="7.800" height="8" rx="1.100" fill="#1463be"/>
 <circle cx="1004.9" cy="218.600" r="2" fill="none" stroke="#fff" stroke-width="1.200"/>
 <!-- send / plane -->
 <path d="M1000.200 245.400l13.600 -2 -4.800 10.400 -2.700 -3.900z" fill="#2f86e4"/>
 <path d="M1000.200 245.400l13.600 -2 -7.500 6.500z" fill="#49b0f4"/>
 <path d="M1001.800 246.400l8.400 .6 -3.900 2.900z" fill="#f4b63a"/>
 <path d="M1006.300 249.900l2.700 3.900 .6 -3.300z" fill="#1d5cc0"/>
 <!-- sidebar separators -->
 <path d="M997.4 273.6h20.6" stroke="#626262" stroke-width="1"/>
 <path d="M1003 297.6h8.8M1007.4 293.2v8.8" class="ic" style="stroke:#d2d2d2;stroke-width:1"/>
 <path d="M997.4 512.4h20.6" stroke="#626262" stroke-width="1"/>
 <!-- sidebar settings gear -->
 <g transform="translate(44.3,461.6)">
 <path d="M962.0 61.0 L964.2 61.0 L964.7 62.7 L965.9 63.2 L967.5 62.4 L969.0 63.9 L968.2 65.5 L968.7 66.7 L970.4 67.2 L970.4 67.4 L968.7 67.9 L968.2 69.1 L969.0 70.7 L967.5 72.2 L965.9 71.4 L964.7 71.9 L964.2 73.6 L962.0 73.6 L961.5 71.9 L960.3 71.4 L958.7 72.2 L957.2 70.7 L958.0 69.1 L957.5 67.9 L955.8 67.4 L955.8 67.2 L957.5 66.7 L958.0 65.5 L957.2 63.9 L958.7 62.4 L960.3 63.2 L961.5 62.7 Z" class="ic" style="stroke-width:1"/>
 <circle cx="963.1" cy="67.3" r="1.9" class="ic" style="stroke-width:1"/>
 </g>
</svg>
<div class="a" style="left:453.9px;top:520.6px;width:77.6px;height:15.4px;background:#3c3a3b;transform:skewY(-.5deg)"></div><span class="t" style="left:455.6px;top:523.9px;font-size:8.8px;color:#f0f0f0;transform:scaleX(0.5552);">Переключатель записи парковки</span><span class="t" style="left:613.8px;top:521.1px;font-size:12.7px;color:#4c4c4c;transform:scaleX(0.6973);background:#f3f1f7;box-shadow:0 0 0 .4px #f3f1f7;">Установите запись парковки ВКЛ/ВЫКЛ</span>
<div class="a" style="left:0;top:546px;width:1024px;height:29px;background:#101010"></div>
<div class="a" style="left:111px;top:546px;width:36px;height:29px;background:#343434"></div>
<div class="a" style="left:111px;top:573.2px;width:36px;height:2px;background:#8db6e2"></div>
<div class="a" style="left:150.4px;top:573.2px;width:30.4px;height:2px;background:#8db6e2"></div>
<div class="a" style="left:1020px;top:546px;width:1px;height:29px;background:#5a5a5a"></div>
<svg width="1024" height="575" viewBox="0 0 1024 575">
 <!-- windows -->
 <path d="M11.8 556.4l5.2-0.8v5h-5.2zM17.8 555.5l6.6-1v6.1h-6.6zM11.8 561.4h5.2v5l-5.2-0.8zM17.8 561.4h6.6v6.1l-6.6-1z" fill="#fff"/>
 <!-- search -->
 <circle cx="56" cy="558.6" r="5.3" fill="none" stroke="#fff" stroke-width="1.7"/>
 <path d="M52.4 562.6l-5.8 6" stroke="#fff" stroke-width="2" stroke-linecap="round"/>
 <!-- film -->
 <g>
  <rect x="86.600" y="560.200" width="12.600" height="8.800" rx="1.600" fill="#242424" stroke="#a8a8a8" stroke-width="1"/>
  <path d="M86.200 557.400l10.800 -4.800 1.200 2.400 -10.800 4.800z" fill="#4a4a4a" stroke="#a0a0a0" stroke-width=".600"/>
  <path d="M88.400 556.600l1.400 2.400M91.200 555.400l1.400 2.400M94 554.200l1.400 2.400" stroke="#e8e8e8" stroke-width="1.300"/>
  <path d="M86.800 561.400h12.200" stroke="#4a4a4a" stroke-width="2"/>
  <path d="M89 560.600l1 1.800M92 560.600l1 1.800M95 560.600l1 1.800" stroke="#e0e0e0" stroke-width="1.200"/>
 </g>
 <!-- edge -->
 <defs>
  <linearGradient id="eg1" x1="0" y1="0" x2="1" y2="1"><stop offset="0" stop-color="#3cc4ea"/><stop offset=".5" stop-color="#1f86d8"/><stop offset="1" stop-color="#0f58b8"/></linearGradient>
  <linearGradient id="eg2" x1="0" y1="0" x2="1" y2="0"><stop offset="0" stop-color="#2cb6e0"/><stop offset="0.45" stop-color="#3cc8a0"/><stop offset="1" stop-color="#78da4e"/></linearGradient>
 </defs>
 <circle cx="129.200" cy="560.500" r="9" fill="url(#eg1)"/>
 <path d="M126 552A9 9 0 0 1 138.200 561.600C137.600 564.800 134.800 566.200 132.200 564.800C133.800 563.600 134.200 561.400 133 559.200C131.600 556.600 128.400 555.600 125 556.800C124.600 554.800 125 553 126 552Z" fill="url(#eg2)"/>
 <path d="M120.300 562C120.800 558.400 124 556.200 127.600 556.400C130.600 556.600 132.400 558.400 132.200 560.400C132 561.800 131 562.400 130.800 563.600C130.600 565 132 566.200 134.200 566C132.600 568 130.200 569.200 127.600 569.400C124 569 121 566 120.300 562Z" fill="#0e52ae"/>
 <path d="M123.800 563C123.600 560.400 125.400 558.400 127.800 558.200C126.400 559.800 126.600 562.400 128.200 564.600C129.600 566.400 131.600 567.400 133.800 567.200C132 568.600 129.400 569.200 127.200 568.600C125.200 567.600 124 565.400 123.800 563Z" fill="#2586dc"/>
 <!-- chrome -->
 <circle cx="165.7" cy="560.4" r="8.8" fill="#e33b2e"/>
 <path d="M162.06 562.50 L158.08 555.61 A9 9 0 0 1 173.66 556.20 L165.70 556.20 Z" fill="#e33b2e"/>
 <path d="M165.70 556.20 L173.66 556.20 A9 9 0 0 1 165.36 569.39 L169.34 562.50 Z" fill="#f7c428"/>
 <path d="M169.34 562.50 L165.36 569.39 A9 9 0 0 1 158.08 555.61 L162.06 562.50 Z" fill="#2e9e4b"/>
 <circle cx="165.7" cy="560.4" r="4.300" fill="#fff"/>
 <circle cx="165.7" cy="560.4" r="3.400" fill="#4381e8"/>
 <!-- tray chevron -->
 <path d="M840.4 562.8l4.4-4.4 4.4 4.4" fill="none" stroke="#f0f0f0" stroke-width="1.2"/>
 <!-- speaker -->
 <path d="M857.2 559.2h2.2l3-2.8v9l-3-2.8h-2.2z" fill="none" stroke="#f0f0f0" stroke-width="1"/>
 <path d="M864.2 558.6a3 3 0 0 1 0 4.6M866 557.2a5.2 5.2 0 0 1 0 7.4M867.8 556a7.200000000000001 7.2 0 0 1 0 9.8" fill="none" stroke="#f0f0f0" stroke-width="0.9"/>
 <!-- battery -->
 <rect x="878.600" y="557.800" width="7.600" height="6.800" rx=".600" fill="#e2e2e2"/>
 <rect x="886.200" y="559.600" width="1.100" height="3" fill="#e8e8e8"/>
 <path d="M875.700 556.400v2.200M877.700 556.400v2.200" stroke="#f0f0f0" stroke-width=".900"/>
 <path d="M874.900 558.600h3.600v1.400a1.800 1.800 0 0 1 -3.600 0z" fill="#f0f0f0"/>
 <path d="M876.700 561.400v2.400h2" fill="none" stroke="#f0f0f0" stroke-width=".900"/>
 <!-- wifi -->
 <path d="M895.4 565.6a8.6 8.6 0 0 1 8.6-8.6M897.8 565.6a6.2 6.2 0 0 1 6.2-6.2M900 565.6a4 4 0 0 1 4-4" fill="none" stroke="#d8d8d8" stroke-width="1"/>
 <rect x="902" y="563.6" width="2" height="2" fill="#f0f0f0"/>
 <!-- notification -->
 <path d="M993.6 555h11.8v8.8h-4.4l-1.7 2-1.7-2h-4z" fill="none" stroke="#f0f0f0" stroke-width="1.2" stroke-linejoin="round"/>
</svg>
<span class="t" style="left:911.0px;top:554.7px;font-size:9.8px;color:#f4f4f4;transform:scaleX(0.7259);-webkit-text-stroke:.25px #f4f4f4;">АНГЛ</span><span class="t" style="left:949.0px;top:548.7px;font-size:10px;color:#f6f6f6;transform:scaleX(0.8190);">22:58</span><span class="t" style="left:937.0px;top:560.9px;font-size:10.8px;color:#b4b4b4;transform:scaleX(0.7594);">. 20.02.2024</span></div>
</body></html>
